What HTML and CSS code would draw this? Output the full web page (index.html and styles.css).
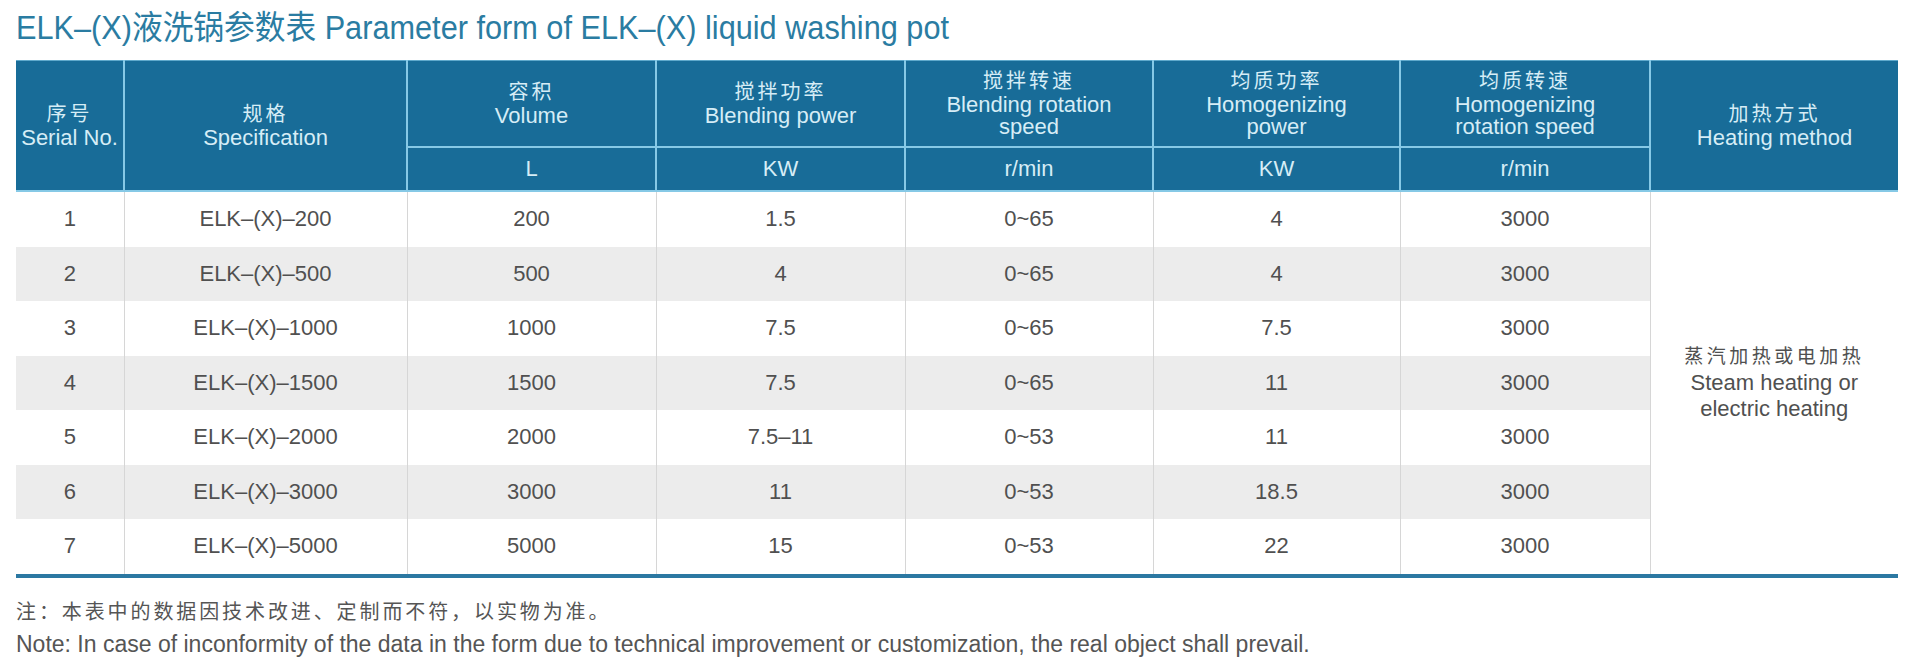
FILE: index.html
```html
<!DOCTYPE html>
<html lang="zh">
<head>
<meta charset="utf-8">
<title>ELK-(X) Parameter form</title>
<link rel="stylesheet" href="styles.css">
</head>
<body>
<div class="page">
  <h1 class="title">ELK–(X)液洗锅参数表 Parameter form of ELK–(X) liquid washing pot</h1>
  <table class="params">
    <colgroup>
      <col class="c1"><col class="c2"><col class="c3"><col class="c4"><col class="c5"><col class="c6"><col class="c7"><col class="c8">
    </colgroup>
    <thead>
      <tr class="h1">
        <th rowspan="2"><span class="zh">序号</span><span class="en">Serial No.</span></th>
        <th rowspan="2"><span class="zh">规格</span><span class="en">Specification</span></th>
        <th><span class="zh">容积</span><span class="en">Volume</span></th>
        <th><span class="zh">搅拌功率</span><span class="en">Blending power</span></th>
        <th><span class="zh">搅拌转速</span><span class="en">Blending rotation<br>speed</span></th>
        <th><span class="zh">均质功率</span><span class="en">Homogenizing<br>power</span></th>
        <th><span class="zh">均质转速</span><span class="en">Homogenizing<br>rotation speed</span></th>
        <th rowspan="2"><span class="zh">加热方式</span><span class="en">Heating method</span></th>
      </tr>
      <tr class="h2">
        <th>L</th>
        <th>KW</th>
        <th>r/min</th>
        <th>KW</th>
        <th>r/min</th>
      </tr>
    </thead>
    <tbody>
      <tr>
        <td>1</td><td>ELK–(X)–200</td><td>200</td><td>1.5</td><td>0~65</td><td>4</td><td>3000</td>
        <td rowspan="7" class="heat"><span class="zh">蒸汽加热或电加热</span><span class="en">Steam heating or<br>electric heating</span></td>
      </tr>
      <tr class="alt"><td>2</td><td>ELK–(X)–500</td><td>500</td><td>4</td><td>0~65</td><td>4</td><td>3000</td></tr>
      <tr><td>3</td><td>ELK–(X)–1000</td><td>1000</td><td>7.5</td><td>0~65</td><td>7.5</td><td>3000</td></tr>
      <tr class="alt"><td>4</td><td>ELK–(X)–1500</td><td>1500</td><td>7.5</td><td>0~65</td><td>11</td><td>3000</td></tr>
      <tr><td>5</td><td>ELK–(X)–2000</td><td>2000</td><td>7.5–11</td><td>0~53</td><td>11</td><td>3000</td></tr>
      <tr class="alt"><td>6</td><td>ELK–(X)–3000</td><td>3000</td><td>11</td><td>0~53</td><td>18.5</td><td>3000</td></tr>
      <tr><td>7</td><td>ELK–(X)–5000</td><td>5000</td><td>15</td><td>0~53</td><td>22</td><td>3000</td></tr>
    </tbody>
  </table>
  <div class="notes">
    <p class="note-zh">注：本表中的数据因技术改进、定制而不符，以实物为准。</p>
    <p class="note-en">Note: In case of inconformity of the data in the form due to technical improvement or customization, the real object shall prevail.</p>
  </div>
</div>
</body>
</html>
```
FILE: styles.css
```css
html, body {
  margin: 0;
  padding: 0;
  background: #ffffff;
}

body {
  width: 1920px;
  height: 660px;
  overflow: hidden;
  font-family: "Liberation Sans", "Noto Sans CJK SC", sans-serif;
}

.page {
  padding: 0 22px 0 16px;
}

.title {
  margin: 0;
  height: 60px;
  line-height: 56px;
  font-size: 33px;
  font-weight: normal;
  color: #2a7ca2;
  white-space: nowrap;
  transform: scaleX(0.93);
  transform-origin: left center;
  font-family: "Liberation Sans", "Noto Sans CJK SC", sans-serif;
}

.params {
  width: 1882px;
  border-collapse: collapse;
  table-layout: fixed;
  border-bottom: 4px solid #2b78a2;
}

.c1 { width: 108px; }
.c2 { width: 283px; }
.c3 { width: 249px; }
.c4 { width: 249px; }
.c5 { width: 248px; }
.c6 { width: 247px; }
.c7 { width: 250px; }
.c8 { width: 248px; }

.params th {
  background: #186c98;
  color: #d6edf6;
  font-weight: normal;
  text-align: center;
  vertical-align: middle;
  border: 2px solid #86c9e6;
  padding: 0;
  font-size: 22px;
  line-height: 22px;
}

.params thead tr:first-child th {
  border-top: 1px solid #5fa9cc;
}

.params thead tr th:first-child {
  border-left: none;
}

.params thead tr.h1 th:last-child {
  border-right: none;
}

.params tr.h1 th {
  height: 85px;
}

.params tr.h2 th {
  height: 42px;
  font-size: 22px;
}

.params th .zh,
.params td .zh {
  display: block;
  font-size: 20px;
  letter-spacing: 3px;
  margin-bottom: 2px;
}

.params th .en,
.params td .en {
  display: block;
}

.params td {
  height: 54.5px;
  padding: 0;
  text-align: center;
  vertical-align: middle;
  font-size: 22px;
  color: #505050;
  border-left: 1px solid #d6d6d6;
}

.params td:first-child {
  border-left: none;
}

.params tr.alt td {
  background: #ececec;
}

.params td.heat {
  background: #ffffff;
  line-height: 26px;
}

.params td.heat .zh {
  font-size: 19px;
  letter-spacing: 3.5px;
  margin-bottom: 0;
}

.notes {
  padding-top: 18px;
}

.notes p {
  margin: 0;
  color: #555555;
  white-space: nowrap;
}

.note-zh {
  font-size: 20px;
  letter-spacing: 2.9px;
  line-height: 32px;
}

.note-en {
  font-size: 23px;
  line-height: 32px;
}
```
